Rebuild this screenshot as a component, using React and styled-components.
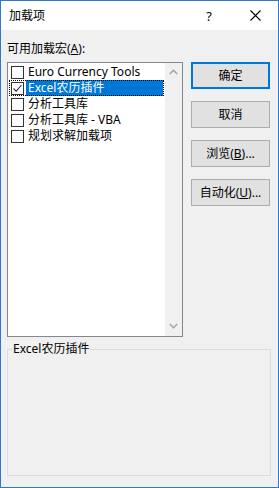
import React from "react";
import styled, { createGlobalStyle } from "styled-components";

const Global = createGlobalStyle`
  html, body { margin: 0; padding: 0; background: #ffffff; }
  body { font-family: "Noto Sans", "Noto Sans CJK SC", sans-serif; font-size: 12px; color: #000; }
  * { box-sizing: border-box; }
`;

const Window = styled.div`
  width: 279px;
  height: 488px;
  border: 1px solid #2b79d0;
  display: flex;
  flex-direction: column;
  background: #f0f0f0;
`;

const TitleBar = styled.div`
  height: 29px;
  background: #ffffff;
  display: flex;
  align-items: center;
  padding-left: 8px;
  flex-shrink: 0;
`;

const Title = styled.div`
  flex: 1;
  font-size: 12px;
  line-height: 16px;
`;

const TitleBtn = styled.div`
  width: ${p => p.$w}px;
  height: 29px;
  display: flex;
  align-items: center;
  justify-content: center;
  font-size: 13px;
`;

const Body = styled.div`
  flex: 1;
  display: flex;
  flex-direction: column;
  padding: 11px 6px 11px 6px;
`;

const Label = styled.div`
  line-height: 16px;
  height: 16px;
  margin-bottom: 5px;
  u { text-decoration: underline; }
`;

const Main = styled.div`
  display: flex;
  align-items: flex-start;
`;

const ListBox = styled.div`
  width: 176px;
  height: 275px;
  border: 1px solid #828790;
  display: flex;
  background: #ffffff;
`;

const Items = styled.div`
  flex: 1;
  padding: 1px 1px 0 1px;
  display: flex;
  flex-direction: column;
`;

const Row = styled.div`
  height: 16px;
  display: flex;
  align-items: center;
  padding-left: 1px;
  outline: ${p => (p.$focus ? "1px dotted #000" : "none")};
  outline-offset: -1px;
`;

const Box = styled.span`
  width: 13px;
  height: 13px;
  border: 1px solid #333333;
  background: #ffffff;
  flex-shrink: 0;
  margin-left: 1px;
  display: flex;
  align-items: center;
  justify-content: center;
`;

const ItemText = styled.span`
  flex: 1;
  height: 16px;
  line-height: 16px;
  margin-left: 2px;
  padding-left: 2px;
  white-space: nowrap;
  background: ${p => (p.$sel ? "#0078d7" : "transparent")};
  color: ${p => (p.$sel ? "#ffffff" : "#000000")};
  margin-right: 1px;
`;

const ScrollBar = styled.div`
  width: 17px;
  background: #f0f0f0;
  display: flex;
  flex-direction: column;
  justify-content: space-between;
  align-items: center;
  padding: 6px 0 7px 0;
`;

const Buttons = styled.div`
  margin-left: 8px;
  display: flex;
  flex-direction: column;
  gap: 12px;
`;

const Button = styled.button`
  width: 79px;
  height: 27px;
  background: #e1e1e1;
  border: ${p => (p.$default ? "2px solid #0078d7" : "1px solid #adadad")};
  font-family: inherit;
  font-size: 12px;
  color: #000;
  padding: 0;
  line-height: 16px;
  u { text-decoration: underline; }
`;

const Group = styled.fieldset`
  margin: 4px 1px 0 0;
  flex: 1;
  border: 1px solid #dcdcdc;
  padding: 0;
  min-width: 0;
  legend {
    margin-left: 4px;
    padding: 0 1px;
    line-height: 16px;
    font-size: 12px;
  }
`;

const Chevron = ({ up }) => (
  <svg width="9" height="6" viewBox="0 0 9 6">
    <path
      d={up ? "M0.8 5 L4.5 1.3 L8.2 5" : "M0.8 1 L4.5 4.7 L8.2 1"}
      fill="none"
      stroke="#a3a3a3"
      strokeWidth="1.5"
    />
  </svg>
);

const Check = () => (
  <svg width="11" height="11" viewBox="0 0 11 11">
    <path d="M1.5 5.5 L4.2 8.2 L9.5 2" fill="none" stroke="#333" strokeWidth="1.1" />
  </svg>
);

const items = [
  { text: "Euro Currency Tools", checked: false },
  { text: "Excel农历插件", checked: true, sel: true },
  { text: "分析工具库", checked: false },
  { text: "分析工具库 - VBA", checked: false },
  { text: "规划求解加载项", checked: false },
];

export default function App() {
  return (
    <>
      <Global />
      <Window>
        <TitleBar>
          <Title>加载项</Title>
          <TitleBtn $w={46}>?</TitleBtn>
          <TitleBtn $w={46}>
            <svg width="11" height="11" viewBox="0 0 11 11">
              <path d="M0.5 0.5 L10.5 10.5 M10.5 0.5 L0.5 10.5" stroke="#000" strokeWidth="1.1" />
            </svg>
          </TitleBtn>
        </TitleBar>
        <Body>
          <Label>
            可用加载宏(<u>A</u>):
          </Label>
          <Main>
            <ListBox>
              <Items>
                {items.map((it) => (
                  <Row key={it.text} $focus={it.sel}>
                    <Box>{it.checked && <Check />}</Box>
                    <ItemText $sel={it.sel}>{it.text}</ItemText>
                  </Row>
                ))}
              </Items>
              <ScrollBar>
                <Chevron up />
                <Chevron />
              </ScrollBar>
            </ListBox>
            <Buttons>
              <Button $default>确定</Button>
              <Button>取消</Button>
              <Button>
                浏览(<u>B</u>)...
              </Button>
              <Button>
                自动化(<u>U</u>)...
              </Button>
            </Buttons>
          </Main>
          <Group>
            <legend>Excel农历插件</legend>
          </Group>
        </Body>
      </Window>
    </>
  );
}
